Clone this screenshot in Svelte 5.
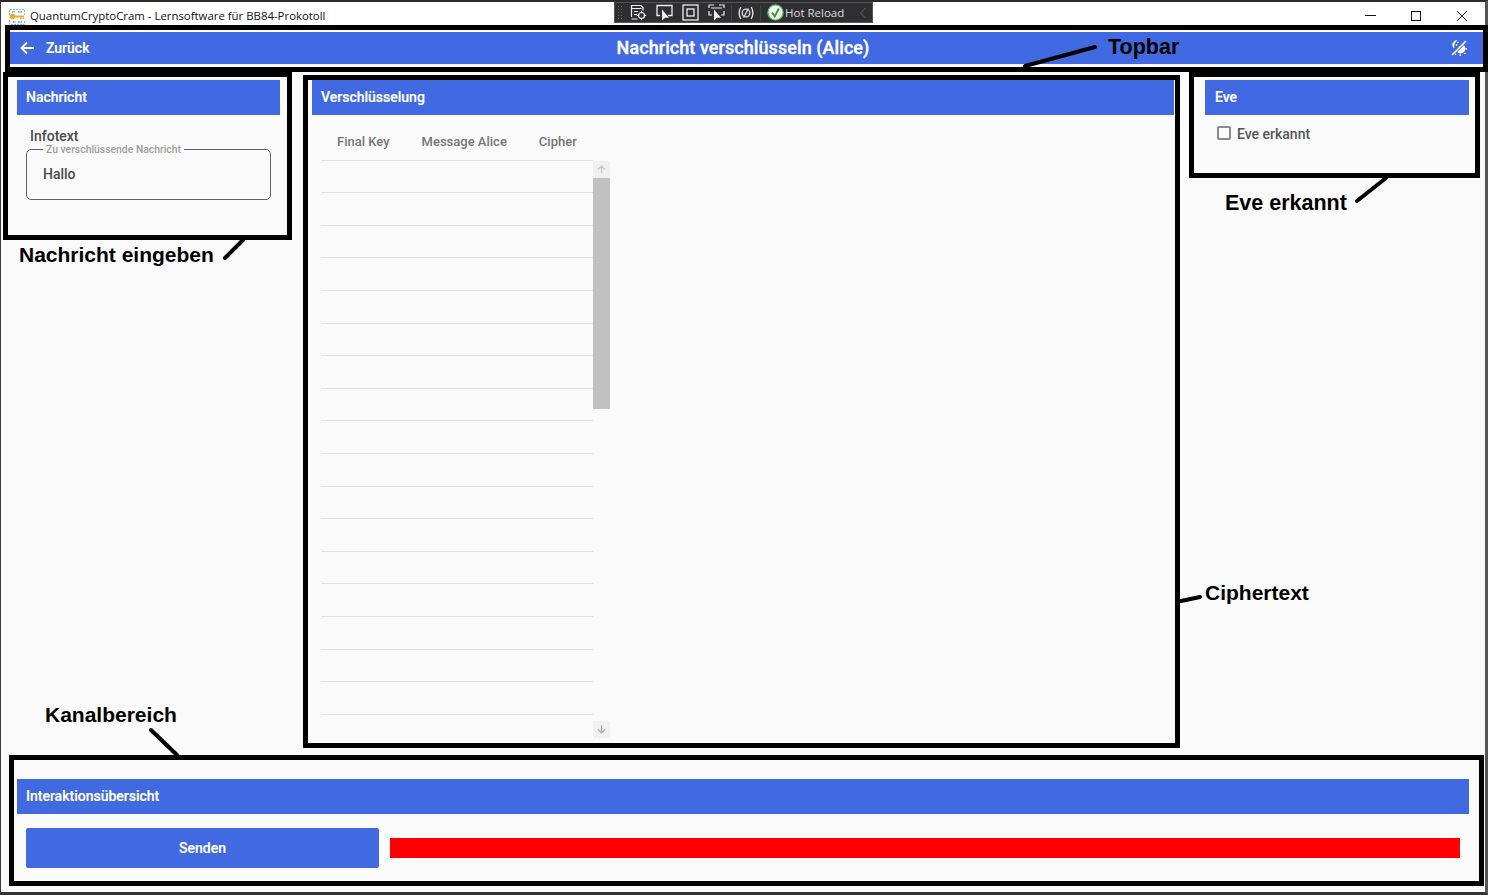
<script>
  const rows = Array.from({ length: 17 });
</script>

<div class="window">
  <header class="titlebar">
    <svg class="appicon" viewBox="0 0 16 16" width="16" height="16">
      <path d="M0.5 6V0.5H15.5V6M0.5 11V15.5H15.5V11" fill="none" stroke="#6cc0ea" stroke-dasharray="2 1"/>
      <path d="M3 3h3M9 3h4M4 13h3M9 13h4" stroke="#3f9fd8" stroke-width="1.5" stroke-dasharray="1.5 1"/>
      <circle cx="3.5" cy="7.5" r="2.7" fill="#f5a623"/>
      <rect x="5" y="6.5" width="10" height="2" fill="#f5a623"/>
      <rect x="11" y="8.5" width="1.5" height="1.5" fill="#f5a623"/>
      <rect x="13.5" y="8.5" width="1.5" height="1.5" fill="#f5a623"/>
    </svg>
    <span class="apptitle">QuantumCryptoCram - Lernsoftware für BB84-Prokotoll</span>
    <div class="winbtns">
      <svg viewBox="0 0 12 12" width="12" height="12"><path d="M1 5.5h11" stroke="#111" fill="none"/></svg>
      <svg viewBox="0 0 12 12" width="12" height="12"><rect x="1.5" y="1.5" width="9" height="9" stroke="#111" fill="none"/></svg>
      <svg viewBox="0 0 12 12" width="12" height="12"><path d="M1 1l10 10M11 1L1 11" stroke="#111" fill="none"/></svg>
    </div>
  </header>

  <nav class="topbar">
    <div class="back">
      <svg viewBox="0 0 16 16" width="16" height="16"><path d="M15 8H2.5M8 2.5L2.5 8 8 13.5" fill="none" stroke="#fff" stroke-width="1.8"/></svg>
      <span>Zurück</span>
    </div>
    <h1>Nachricht verschlüsseln (Alice)</h1>
    <svg class="theme" viewBox="0 0 16 16" width="16" height="16">
      <path d="M1 15L15 1" stroke="#fff" stroke-width="1.6"/>
      <path d="M6 0.2C2 0.8 0.2 4.8 3 7.8 2.8 4.8 3.6 2.2 6 0.2z" fill="#fff" stroke="#fff" stroke-width="0.6"/>
      <path d="M6.2 12A4.6 4.6 0 0 0 13 5.2z" fill="#fff"/>
      <path d="M6.2 2.4h1.4M5 5h1.3M14.4 8.8h1.6M13.4 13l1.1 1.1M9.2 14.2v1.8M5 13.8l-.9.9" stroke="#fff" stroke-width="1.4"/>
    </svg>
  </nav>

  <main class="columns">
    <section class="left">
      <h2 class="head">Nachricht</h2>
      <p class="info">Infotext</p>
      <fieldset class="field">
        <legend>Zu verschlüssende Nachricht</legend>
        <span>Hallo</span>
      </fieldset>
    </section>

    <section class="center">
      <h2 class="head">Verschlüsselung</h2>
      <div class="tablecols">
        <span>Final Key</span><span>Message Alice</span><span>Cipher</span>
      </div>
      <div class="tablebody">
        <div class="rows">
          {#each rows as _}
            <div class="row"></div>
          {/each}
        </div>
        <div class="scrollbar">
          <div class="sbtn">
            <svg viewBox="0 0 9 9" width="9" height="9"><path d="M4.5 8.5V1M1 4.5L4.5 1 8 4.5" fill="none" stroke="#c4c4c4" stroke-width="1.2"/></svg>
          </div>
          <div class="thumb"></div>
          <div class="track"></div>
          <div class="sbtn">
            <svg viewBox="0 0 9 9" width="9" height="9"><path d="M4.5 0.5V8M1 4.5L4.5 8 8 4.5" fill="none" stroke="#a8a8a8" stroke-width="1.2"/></svg>
          </div>
        </div>
      </div>
    </section>

    <section class="right">
      <h2 class="head eve">Eve</h2>
      <label class="check">
        <span class="box"></span>
        <span>Eve erkannt</span>
      </label>
    </section>
  </main>

  <footer class="channel">
    <h2 class="head">Interaktionsübersicht</h2>
    <div class="actions">
      <button>Senden</button>
      <div class="redbar"></div>
    </div>
  </footer>

  <div class="vs">
    <span class="grip"></span>
    <svg viewBox="0 0 17 17" width="17" height="17"><path d="M1.5 13V1.5H11l2 2v3M1.5 4.5h10M4 7.5h4M4 10.5h3M1.5 15h6" fill="none" stroke="#eee" stroke-width="1.2"/><circle cx="11.5" cy="11.5" r="3" fill="none" stroke="#eee" stroke-width="1.2"/><path d="M11.5 6.8v2.4M11.5 13.8v2.4M6.8 11.5h2.4M13.8 11.5h2.4" stroke="#eee"/></svg>
    <svg viewBox="0 0 17 17" width="17" height="17"><path d="M4 11.5H1V1.5H16V11.5H12" fill="none" stroke="#eee" stroke-width="1.3"/><path d="M6 5.5v11l3-2.8 4 .1z" fill="#eee"/></svg>
    <svg viewBox="0 0 17 17" width="17" height="17"><rect x="1" y="1" width="15" height="15" fill="none" stroke="#eee" stroke-width="1.3"/><rect x="5" y="5" width="7" height="7" fill="none" stroke="#eee" stroke-width="1.3"/></svg>
    <svg viewBox="0 0 17 17" width="17" height="17"><path d="M1 4V1h5M11 1h5v3M1 7v4h3M16 7v4h-3M3 4h11" fill="none" stroke="#eee" stroke-width="1.2"/><path d="M6 5.5v11l3-2.8 4 .1z" fill="#eee"/></svg>
    <span class="sep"></span>
    <svg class="rel" viewBox="0 0 16 16" width="16" height="16"><path d="M2.8 2Q-0.5 8 2.8 14M13.2 2Q16.5 8 13.2 14" fill="none" stroke="#ddd" stroke-width="1.4"/><circle cx="8" cy="8" r="3.8" fill="none" stroke="#ddd" stroke-width="1.3"/><path d="M5.5 12.5l5-9" stroke="#ddd" stroke-width="1.3"/></svg>
    <span class="sep"></span>
    <svg viewBox="0 0 17 17" width="17" height="17"><circle cx="8.5" cy="8.5" r="7.6" fill="#f4f4f4" stroke="#5cb85c" stroke-width="1.4"/><path d="M5 8.5l2.8 4 4-8" fill="none" stroke="#2e9e34" stroke-width="1.9"/></svg>
    <span class="hot">Hot Reload</span>
    <svg class="chev" viewBox="0 0 8 12" width="8" height="12"><path d="M6.5 1L1.5 6l5 5" fill="none" stroke="#666"/></svg>
  </div>

  <div class="frame f-top"></div>
  <div class="frame f-left"></div>
  <div class="frame f-center"></div>
  <div class="frame f-right"></div>
  <div class="frame f-bottom"></div>

  <svg class="leaders" viewBox="0 0 1488 895" width="1488" height="895">
    <g stroke="#000" stroke-width="4" stroke-linecap="round" fill="none">
      <path d="M1025 66L1095 47"/>
      <path d="M225 258L243 240"/>
      <path d="M1357 201L1386 178"/>
      <path d="M1181 601L1200 597"/>
      <path d="M151 730L177 755"/>
    </g>
  </svg>

  <span class="note n-top">Topbar</span>
  <span class="note n-left">Nachricht eingeben</span>
  <span class="note n-eve">Eve erkannt</span>
  <span class="note n-cipher">Ciphertext</span>
  <span class="note n-kanal">Kanalbereich</span>
</div>

<style>
  :global(body) {
    margin: 0;
    background: #fafafa;
  }

  .window {
    position: relative;
    box-sizing: border-box;
    width: 1488px;
    height: 895px;
    display: flex;
    flex-direction: column;
    background: #fafafa;
    border-top: 2px solid #2b2b2b;
    border-left: 1px solid #3a3a3a;
    border-right: 3px solid #555;
    border-bottom: 3px solid #333;
    font-family: Roboto, sans-serif;
    color: #424242;
  }

  .titlebar {
    height: 30px;
    flex: none;
    box-sizing: border-box;
    background: #fff;
    display: flex;
    align-items: flex-start;
    padding: 7px 0 0 8px;
    font-family: "Open Sans", sans-serif;
    font-size: 11.4px;
    color: #111;
  }

  .apptitle {
    margin: -1px 0 0 5px;
    line-height: 15px;
  }

  .appicon {
    flex: none;
  }

  .winbtns {
    margin: 1px 0 0 auto;
    display: flex;
    gap: 34px;
    padding-right: 17px;
  }

  .topbar {
    flex: none;
    height: 32px;
    margin: 0 2px 0 9px;
    background: #4169e1;
    color: #fff;
    display: grid;
    grid-template-columns: 1fr auto 1fr;
    align-items: center;
    padding: 0 16px 0 9px;
  }

  .back {
    display: flex;
    align-items: center;
    gap: 11px;
    font-size: 14px;
    font-weight: 500;
    -webkit-text-stroke: 0.2px #fff;
  }

  .topbar h1 {
    margin: 0 0 2px;
    font-size: 18px;
    font-weight: 500;
    letter-spacing: 0.07px;
    -webkit-text-stroke: 0.35px #fff;
  }

  .theme {
    justify-self: end;
  }

  .columns {
    flex: 1;
    min-height: 0;
    display: flex;
    padding: 16px 0 0 16px;
  }

  .left {
    flex: none;
    width: 263px;
    margin-right: 32px;
  }

  .center {
    flex: none;
    width: 862px;
    margin-right: 31px;
  }

  .right {
    flex: none;
    width: 264px;
  }

  .head {
    margin: 0;
    height: 35px;
    line-height: 35px;
    padding-left: 9px;
    background: #4169e1;
    color: #fff;
    font-size: 14px;
    font-weight: 500;
    -webkit-text-stroke: 0.2px #fff;
  }

  .head.eve {
    padding-left: 10px;
  }

  .info {
    margin: 13px 0 0 13px;
    font-size: 14px;
    font-weight: 500;
    line-height: 16px;
    color: #4a4a4a;
  }

  .field {
    box-sizing: border-box;
    width: 245px;
    height: 58px;
    margin: -2px 0 0 9px;
    padding: 0 0 0 16px;
    border: 1px solid #616161;
    border-radius: 5px;
    font-size: 14px;
    font-weight: 500;
    color: #4a4a4a;
  }

  .field legend {
    margin-left: 0;
    padding: 2px 3px 0;
    font-size: 10.4px;
    line-height: 12px;
    color: #9e9e9e;
  }

  .field span {
    display: block;
    margin-top: 10px;
    line-height: 16px;
  }

  .tablecols {
    display: flex;
    height: 45px;
    align-items: center;
    padding: 8px 0 0 25px;
    box-sizing: border-box;
    gap: 32px;
    font-size: 13px;
    font-weight: 500;
    color: #757575;
  }

  .tablebody {
    display: flex;
    margin-left: 9px;
    height: 578px;
  }

  .rows {
    width: 272px;
    border-top: 1px solid #e0e0e0;
    margin-top: -0.4px;
    align-self: flex-start;
  }

  .row {
    box-sizing: border-box;
    height: 32.6px;
    border-bottom: 1px solid #e0e0e0;
  }

  .scrollbar {
    width: 17px;
    margin-top: 1px;
    display: flex;
    flex-direction: column;
  }

  .sbtn {
    height: 17px;
    flex: none;
    background: #f0f0f0;
    display: flex;
    align-items: center;
    justify-content: center;
  }

  .thumb {
    height: 231px;
    flex: none;
    background: #c1c1c1;
  }

  .track {
    flex: 1;
  }

  .check {
    display: flex;
    align-items: center;
    gap: 6px;
    margin: 11px 0 0 12px;
    font-size: 14px;
    font-weight: 500;
    color: #555;
  }

  .box {
    box-sizing: border-box;
    width: 14px;
    height: 14px;
    margin-top: -2px;
    border: 2px solid #8a8a8a;
    border-radius: 2px;
  }

  .channel {
    flex: none;
    height: 113px;
    margin: 0 16px 0 16px;
    box-sizing: border-box;
  }

  .actions {
    display: flex;
    align-items: center;
    gap: 11px;
    padding: 14px 9px 0 9px;
  }

  .actions button {
    flex: none;
    width: 353px;
    height: 40px;
    border: 0;
    border-radius: 2px;
    background: #4169e1;
    color: #fff;
    font-family: Roboto, sans-serif;
    font-size: 14px;
    font-weight: 500;
    -webkit-text-stroke: 0.2px #fff;
  }

  .redbar {
    flex: 1;
    height: 20px;
    background: #f00;
  }

  .vs {
    position: absolute;
    left: 613px;
    top: 0;
    width: 259px;
    height: 21px;
    box-sizing: border-box;
    background: #2f2f32;
    border: 1px solid #555;
    display: flex;
    align-items: center;
    gap: 9px;
    padding-left: 2px;
    color: #ddd;
    font-family: "Open Sans", sans-serif;
    font-size: 11.5px;
    white-space: nowrap;
  }

  .grip {
    width: 6px;
    height: 16px;
    margin-right: -2px;
    background-image: radial-gradient(#666 0.6px, transparent 0.8px);
    background-size: 3px 3px;
  }

  .sep {
    width: 1px;
    height: 16px;
    margin: 0 -3px;
    background: #444;
  }

  .hot {
    margin-left: -8px;
  }

  .chev {
    margin-left: 6px;
  }

  .frame {
    position: absolute;
    box-sizing: border-box;
    border: 5px solid #000;
  }

  .f-top { left: 4px; top: 23px; width: 1483px; height: 47px; }
  .f-left { left: 2px; top: 70px; width: 289px; height: 168px; }
  .f-center { left: 302px; top: 73px; width: 877px; height: 673px; }
  .f-right { left: 1188px; top: 70px; width: 291px; height: 106px; }
  .f-bottom { left: 8px; top: 753px; width: 1475px; height: 131px; }

  .leaders {
    position: absolute;
    left: -1px;
    top: -2px;
    pointer-events: none;
  }

  .note {
    position: absolute;
    font-family: "Liberation Sans", Arial, sans-serif;
    font-size: 21px;
    font-weight: 700;
    line-height: 24px;
    color: #000;
    white-space: nowrap;
  }

  .n-top { left: 1107px; top: 33px; font-size: 21.5px; }
  .n-left { left: 18px; top: 241px; }
  .n-eve { left: 1224px; top: 189px; font-size: 21.5px; }
  .n-cipher { left: 1204px; top: 579px; }
  .n-kanal { left: 44px; top: 701px; }
</style>
